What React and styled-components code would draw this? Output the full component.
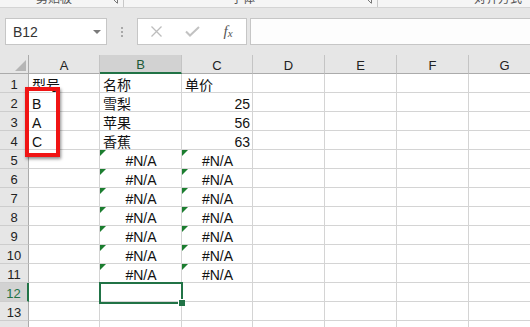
import * as React from "react"
import styled, { createGlobalStyle } from "styled-components"

const GlobalStyle = createGlobalStyle`
  html, body {
    margin: 0;
    padding: 0;
    overflow: hidden;
    background: #fff;
  }
  body {
    font-family: "Liberation Sans", "Noto Sans CJK SC", sans-serif;
    color: #000;
  }
`

const Window = styled.div`
  width: 530px;
  height: 327px;
  display: flex;
  flex-direction: column;
  overflow: hidden;
  background: #fff;
`

const RibbonEdge = styled.div`
  height: 7px;
  flex-shrink: 0;
  display: flex;
  overflow: hidden;
  background: #f5f5f5;
  border-bottom: 1px solid #d4d4d4;
`

const RibbonGroup = styled.div`
  width: ${(p) => p.$w}px;
  flex-shrink: 0;
  display: flex;
  align-items: flex-start;
  border-right: 1px solid #c8c8c8;
`

const GroupLabel = styled.span`
  flex: 1;
  text-align: center;
  font-family: "Noto Sans CJK SC", sans-serif;
  font-size: 12px;
  line-height: 12px;
  margin-top: -8px;
  color: #555;
`

const Launcher = styled.svg`
  width: 7px;
  height: 7px;
  margin: -3px 5px 0 3px;
`

const FormulaBar = styled.div`
  height: 47px;
  flex-shrink: 0;
  display: flex;
  align-items: center;
  padding-left: 5px;
  background: #e6e6e6;
`

const Box = styled.div`
  height: 27px;
  box-sizing: border-box;
  background: #fff;
  border: 1px solid #c6c6c6;
`

const NameBox = styled(Box)`
  width: 102px;
  display: flex;
  align-items: center;
  justify-content: space-between;
  padding: 0 5px 0 7px;
  font-size: 14px;
  color: #333;
`

const Grip = styled.div`
  width: 30px;
  display: flex;
  flex-direction: column;
  align-items: center;
  gap: 2px;
`

const Dot = styled.span`
  width: 2px;
  height: 2px;
  background: #a8a8a8;
`

const FxBox = styled(Box)`
  width: 110px;
  display: grid;
  grid-template-columns: repeat(3, 36px);
  align-items: center;
  justify-items: center;
`

const FxLabel = styled.span`
  font-family: "Liberation Serif", serif;
  font-style: italic;
  font-size: 15px;
  color: #555;
  sub {
    font-size: 11px;
    vertical-align: -1px;
  }
`

const FormulaInput = styled(Box)`
  flex: 1;
  margin-left: 3px;
  border-right: none;
  background: #fdfdfd;
`

const Sheet = styled.div`
  flex: 1;
  position: relative;
  overflow: hidden;
  display: grid;
  grid-template-columns: 29px 71px 82px 71px 72px 72px 72px 72px;
  grid-auto-rows: 19px;
`

const Corner = styled.div`
  background: #e6e6e6;
  border-right: 1px solid #ababab;
  border-bottom: 1px solid #ababab;
  display: flex;
  align-items: flex-end;
  justify-content: flex-end;
  padding: 0 2px 2px 0;
`

const ColHead = styled.div`
  background: ${(p) => (p.$selected ? "#d2d2d2" : "#e6e6e6")};
  border-right: 1px solid #c4c4c4;
  border-bottom: ${(p) => (p.$selected ? "2px solid #217346" : "1px solid #ababab")};
  display: flex;
  align-items: flex-end;
  justify-content: center;
  font-size: 13px;
  line-height: 15px;
  color: ${(p) => (p.$selected ? "#1d5a38" : "#222")};
`

const RowHead = styled.div`
  background: ${(p) => (p.$selected ? "#d2d2d2" : "#e6e6e6")};
  border-right: ${(p) => (p.$selected ? "2px solid #217346" : "1px solid #ababab")};
  border-bottom: 1px solid #cdcdcd;
  display: flex;
  align-items: flex-end;
  justify-content: center;
  font-size: 13px;
  line-height: 15px;
  color: ${(p) => (p.$selected ? "#217346" : "#222")};
`

const Cell = styled.div`
  position: relative;
  border-right: 1px solid #d4d4d4;
  border-bottom: 1px solid #d4d4d4;
  padding: 0 2px 0 3px;
  display: flex;
  align-items: flex-end;
  justify-content: ${(p) =>
    p.$align === "right" ? "flex-end" : p.$align === "center" ? "center" : "flex-start"};
  font-size: 14px;
  line-height: 14px;
  white-space: nowrap;
  color: #111;
`

const ErrorFlag = styled.span`
  position: absolute;
  top: 0;
  left: 0;
  width: 0;
  height: 0;
  border-top: 6px solid #1b7d2f;
  border-right: 6px solid transparent;
`

const Selection = styled.div`
  position: absolute;
  left: 99px;
  top: 227px;
  width: 84px;
  height: 22px;
  box-sizing: border-box;
  border: 2px solid #217346;
  pointer-events: none;
`

const FillHandle = styled.span`
  position: absolute;
  right: -4px;
  bottom: -4px;
  width: 6px;
  height: 6px;
  background: #217346;
  border-left: 1px solid #fff;
  border-top: 1px solid #fff;
`

const Highlight = styled.div`
  position: absolute;
  left: 25px;
  top: 32px;
  width: 35px;
  height: 70px;
  box-sizing: border-box;
  border: 4px solid #f01414;
  box-shadow: 1px 2px 3px rgba(0, 0, 0, 0.45);
  pointer-events: none;
`

const cols = ["A", "B", "C", "D", "E", "F", "G"]

const data = {
  1: { A: "型号", B: "名称", C: "单价" },
  2: { A: "B", B: "雪梨", C: 25 },
  3: { A: "A", B: "苹果", C: 56 },
  4: { A: "C", B: "香蕉", C: 63 },
}
for (let r = 5; r <= 11; r++) {
  data[r] = { B: "#N/A", C: "#N/A" }
}

const rows = Array.from({ length: 14 }, (_, i) => i + 1)

const alignOf = (v) => {
  if (typeof v === "number") return "right"
  if (v === "#N/A") return "center"
  return "left"
}

const App = () => {
  return (
    <Window>
      <GlobalStyle />
      <RibbonEdge>
        <RibbonGroup $w={123}>
          <GroupLabel>剪贴板</GroupLabel>
          <Launcher viewBox="0 0 7 7">
            <path d="M0.5 0.5 H6.5 V6.5" stroke="#777" fill="none" />
            <path d="M3 3 L6 6" stroke="#777" />
          </Launcher>
        </RibbonGroup>
        <RibbonGroup $w={253}>
          <GroupLabel>字体</GroupLabel>
          <Launcher viewBox="0 0 7 7">
            <path d="M0.5 0.5 H6.5 V6.5" stroke="#777" fill="none" />
            <path d="M3 3 L6 6" stroke="#777" />
          </Launcher>
        </RibbonGroup>
        <RibbonGroup $w={240}>
          <GroupLabel>对齐方式</GroupLabel>
        </RibbonGroup>
      </RibbonEdge>

      <FormulaBar>
        <NameBox>
          <span>B12</span>
          <svg width="8" height="4" viewBox="0 0 8 4">
            <polygon points="0,0 8,0 4,4" fill="#7a7a7a" />
          </svg>
        </NameBox>
        <Grip>
          <Dot />
          <Dot />
          <Dot />
        </Grip>
        <FxBox>
          <svg width="11" height="11" viewBox="0 0 11 11">
            <path d="M0.5 0.5 L10.5 10.5 M10.5 0.5 L0.5 10.5" stroke="#bdbdbd" strokeWidth="1.3" />
          </svg>
          <svg width="15" height="11" viewBox="0 0 15 11">
            <path d="M1 5.5 L5 9.5 L14 1" stroke="#c2c2c2" strokeWidth="2" fill="none" />
          </svg>
          <FxLabel>
            f<sub>x</sub>
          </FxLabel>
        </FxBox>
        <FormulaInput />
      </FormulaBar>

      <Sheet>
        <Corner>
          <svg width="11" height="11" viewBox="0 0 11 11">
            <polygon points="11,0 11,11 0,11" fill="#b5b5b5" />
          </svg>
        </Corner>
        {cols.map((c) => (
          <ColHead key={c} $selected={c === "B"}>
            {c}
          </ColHead>
        ))}
        {rows.map((r) => (
          <React.Fragment key={r}>
            <RowHead $selected={r === 12}>{r}</RowHead>
            {cols.map((c) => {
              const v = data[r] && data[r][c]
              return (
                <Cell key={c} $align={alignOf(v)}>
                  {v === "#N/A" && <ErrorFlag />}
                  {v}
                </Cell>
              )
            })}
          </React.Fragment>
        ))}
        <Highlight />
        <Selection>
          <FillHandle />
        </Selection>
      </Sheet>
    </Window>
  )
}

export default App
